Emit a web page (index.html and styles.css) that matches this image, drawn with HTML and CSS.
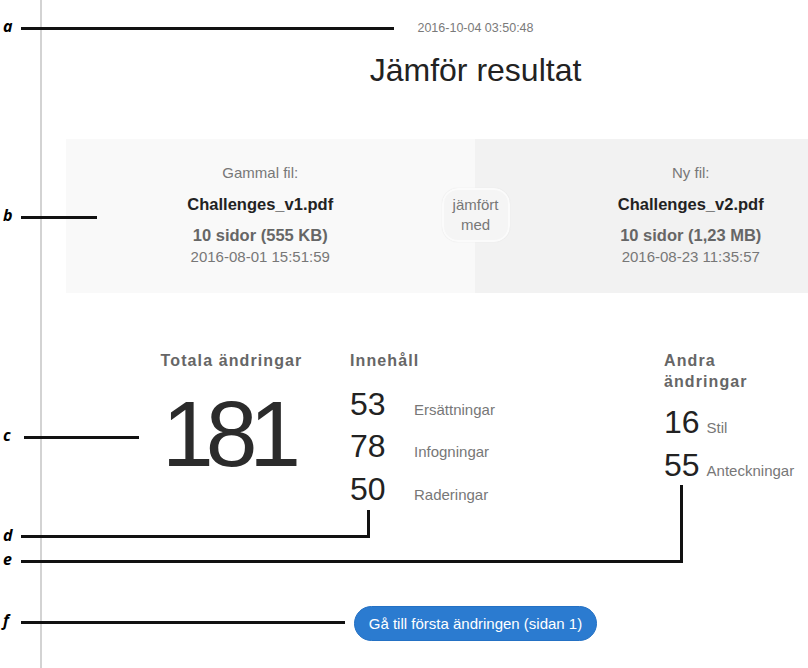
FILE: index.html
```html
<!DOCTYPE html>
<html lang="sv">
<head>
<meta charset="utf-8">
<title>Jämför resultat</title>
<link rel="stylesheet" href="styles.css">
</head>
<body>
<div class="page">
  <div class="gutter"></div>
  <main class="main">
    <div class="stamp">2016-10-04 03:50:48</div>
    <h1 class="title">Jämför resultat</h1>

    <section class="files">
      <div class="file">
        <div class="file-label">Gammal fil:</div>
        <div class="file-name">Challenges_v1.pdf</div>
        <div class="file-size">10 sidor (555 KB)</div>
        <div class="file-date">2016-08-01 15:51:59</div>
      </div>
      <div class="versus">jämfört<br>med</div>
      <div class="file">
        <div class="file-label">Ny fil:</div>
        <div class="file-name">Challenges_v2.pdf</div>
        <div class="file-size">10 sidor (1,23 MB)</div>
        <div class="file-date">2016-08-23 11:35:57</div>
      </div>
    </section>

    <section class="stats">
      <div class="stat-total">
        <h2 class="stat-head">Totala ändringar</h2>
        <div class="total-num">181</div>
      </div>
      <div class="stat-content">
        <h2 class="stat-head">Innehåll</h2>
        <ul class="rows rows-content">
          <li class="row"><span class="num">53</span><span class="label">Ersättningar</span></li>
          <li class="row"><span class="num">78</span><span class="label">Infogningar</span></li>
          <li class="row"><span class="num">50</span><span class="label">Raderingar</span></li>
        </ul>
      </div>
      <div class="stat-other">
        <h2 class="stat-head">Andra ändringar</h2>
        <ul class="rows rows-other">
          <li class="row"><span class="num">16</span><span class="label">Stil</span></li>
          <li class="row"><span class="num">55</span><span class="label">Anteckningar</span></li>
        </ul>
      </div>
    </section>

    <div class="actions">
      <button class="btn" type="button">Gå till första ändringen (sidan 1)</button>
    </div>
  </main>
</div>

<div class="callouts">
  <span class="tag tag-a">a</span><span class="hline l-a"></span>
  <span class="tag tag-b">b</span><span class="hline l-b"></span>
  <span class="tag tag-c">c</span><span class="hline l-c"></span>
  <span class="tag tag-d">d</span><span class="hline l-d"></span><span class="vline v-d"></span>
  <span class="tag tag-e">e</span><span class="hline l-e"></span><span class="vline v-e"></span>
  <span class="tag tag-f">f</span><span class="hline l-f"></span>
</div>
</body>
</html>
```

FILE: styles.css
```css
html, body {
  margin: 0;
  padding: 0;
  overflow: hidden;
  background: #ffffff;
}

body {
  font-family: "Liberation Sans", Arial, sans-serif;
  color: #222;
  position: relative;
  width: 808px;
  height: 668px;
}

.page {
  display: flex;
  min-height: 668px;
}

.gutter {
  width: 40px;
  flex-shrink: 0;
  border-right: 2px solid #d3d3d3;
}

.main {
  width: 867px;
  flex-shrink: 0;
  padding-top: 21px;
  text-align: center;
}

.stamp {
  font-size: 12.5px;
  line-height: 14px;
  color: #7a7a7a;
}

.title {
  margin: 16px 0 0;
  font-size: 32px;
  line-height: 38px;
  font-weight: normal;
  color: #222;
}

/* file comparison box */
.files {
  margin: 50px 24px 0;
  padding: 24px 33px 26px;
  display: grid;
  grid-template-columns: 1fr 68px 1fr;
  column-gap: 20px;
  align-items: center;
  background: linear-gradient(to right, #f9f9f9 50%, #f2f2f2 50%);
}

.file-label {
  font-size: 15px;
  line-height: 20px;
  color: #777;
}

.file-name {
  margin-top: 10px;
  font-size: 16.5px;
  line-height: 22px;
  font-weight: bold;
  color: #222;
}

.file-size {
  margin-top: 9px;
  font-size: 16.5px;
  line-height: 22px;
  font-weight: bold;
  color: #666;
}

.file-date {
  margin-top: 1px;
  font-size: 15px;
  line-height: 20px;
  color: #777;
}

.versus {
  box-sizing: border-box;
  width: 68px;
  height: 54px;
  padding-top: 5px;
  border: 2px solid #fbfbfb;
  border-radius: 16px;
  background: #f5f5f5;
  box-shadow: 0 0 1px #dcdcdc;
  font-size: 15px;
  line-height: 20px;
  color: #777;
}

/* statistics */
.stats {
  margin-top: 57px;
  display: flex;
  align-items: flex-start;
  text-align: left;
}

.stat-head {
  margin: 0;
  font-size: 16px;
  line-height: 21px;
  font-weight: bold;
  letter-spacing: 1.1px;
  color: #666;
}

.stat-total {
  width: 189px;
  margin-left: 95px;
  text-align: center;
}

.total-num {
  margin-top: 13px;
  font-size: 93px;
  line-height: 100px;
  letter-spacing: -8px;
  text-indent: -8px;
  color: #2b2b2b;
}

.stat-content {
  width: 314px;
  margin-left: 24px;
}

.stat-other {
  width: 100px;
}

.rows {
  list-style: none;
  margin: 0;
  padding: 0;
}

.rows-content {
  margin-top: 11.5px;
}

.rows-other {
  margin-top: 9px;
}

.row {
  display: flex;
  align-items: baseline;
  white-space: nowrap;
  height: 42.5px;
}

.num {
  font-size: 32px;
  line-height: 42.5px;
  color: #222;
}

.rows-content .num {
  width: 64px;
}

.rows-other .row {
  gap: 7px;
}

.label {
  font-size: 15px;
  line-height: 17px;
  color: #777;
}

/* action */
.actions {
  margin-top: 96px;
}

.btn {
  height: 35px;
  padding: 0 14px;
  border: 1px solid #2471c4;
  border-radius: 18px;
  background: #2b7bd0;
  color: #ffffff;
  font-family: "Liberation Sans", Arial, sans-serif;
  font-size: 15px;
  line-height: 33px;
}

/* annotation callouts */
.callouts {
  position: absolute;
  left: 0;
  top: 0;
  width: 808px;
  height: 668px;
  pointer-events: none;
}

.tag {
  position: absolute;
  left: 3px;
  font-family: "Open Sans", "DejaVu Sans", sans-serif;
  font-style: italic;
  font-weight: bold;
  font-size: 16px;
  line-height: 18px;
  color: #000;
}

.hline, .vline {
  position: absolute;
  background: #111;
}

.hline { height: 3px; }
.vline { width: 3px; }

.tag-a { top: 17px; }
.tag-b { top: 206px; }
.tag-c { top: 426px; }
.tag-d { top: 526px; }
.tag-e { top: 550px; }
.tag-f { top: 611px; }

.l-a { left: 21px; top: 27px; width: 373px; }
.l-b { left: 21px; top: 216px; width: 76px; }
.l-c { left: 24px; top: 436px; width: 115px; }
.l-d { left: 21px; top: 535px; width: 349px; }
.v-d { left: 367px; top: 510px; height: 28px; }
.l-e { left: 21px; top: 560px; width: 662px; }
.v-e { left: 680px; top: 485px; height: 78px; }
.l-f { left: 21px; top: 621px; width: 324px; }
```
